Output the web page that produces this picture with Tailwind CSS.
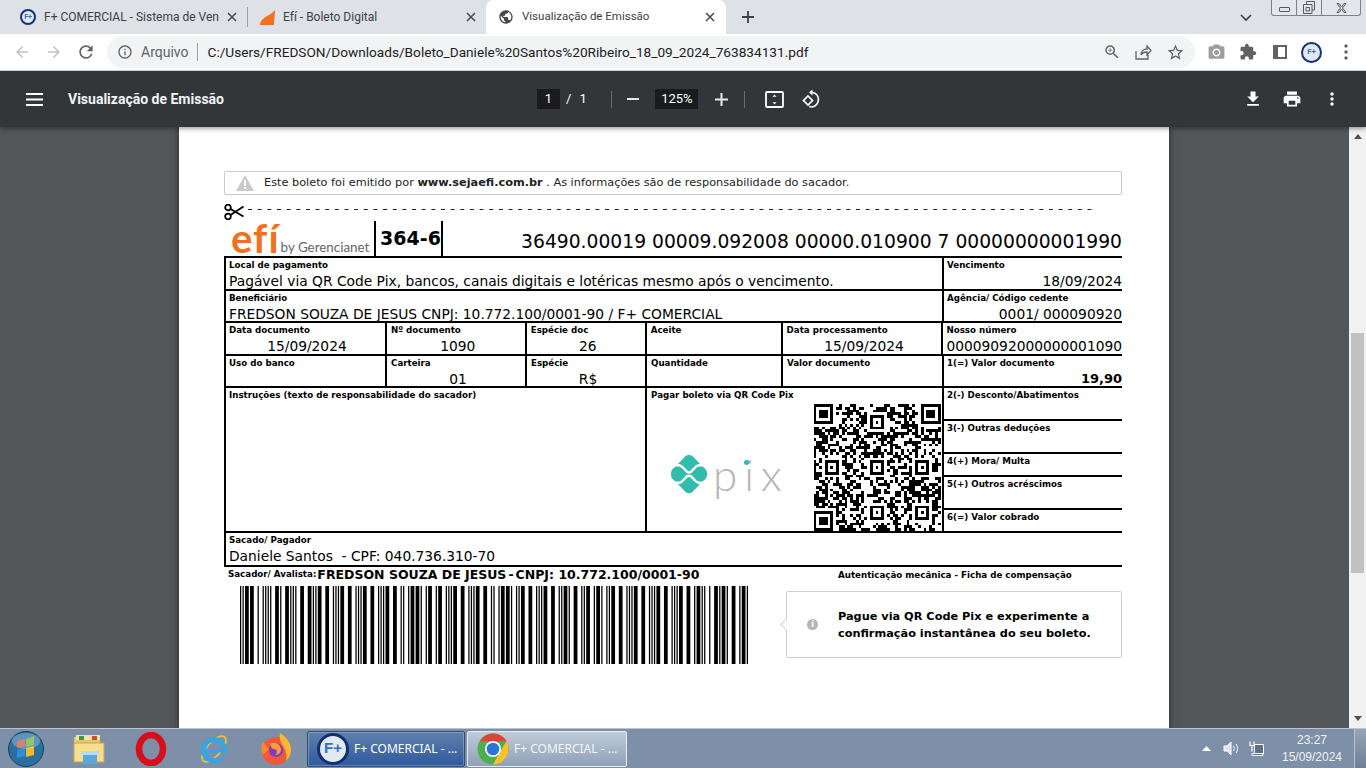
<!DOCTYPE html>
<html lang="pt-BR">
<head>
  <meta charset="UTF-8">
  <title>Visualização de Emissão</title>
  <script src="https://cdn.jsdelivr.net/npm/@tailwindcss/browser@4"></script>
</head>
<body class="bg-[#525659]">
  <div class="flex flex-col w-[1366px] h-[768px] overflow-hidden font-['Roboto',sans-serif]">

    <!-- Abas do navegador -->
    <div class="relative flex items-end h-[34px] shrink-0 bg-[#dee1e6] text-[12px] text-[#3c4043]">
      <div class="flex items-center w-[248px] h-[34px] pl-[20px] shrink-0">
        <div class="flex items-center justify-center w-[16px] h-[16px] rounded-full border-2 border-[#12327f] bg-[#e4e8ef] text-[7px] font-bold text-[#2f6fd0] shrink-0">F+</div>
        <span class="ml-[8px] w-[174px] whitespace-nowrap">F+ COMERCIAL - Sistema de Ven</span>
        <svg class="ml-[9px] w-[10px] h-[10px] shrink-0" viewBox="0 0 10 10" fill="none" stroke="#45484c" stroke-width="1.5"><path d="M1 1l8 8M9 1l-8 8"/></svg>
        <span class="ml-[10px] w-px h-[20px] bg-[#9aa0a6]"></span>
      </div>
      <div class="flex items-center w-[238px] h-[34px] pl-[11px] shrink-0">
        <svg class="w-[17px] h-[17px]" viewBox="0 0 17 17"><path d="M1 16c0-5 5-8 9-10 2-1 4-3 6-5l-1 15H3c-1 0-2 0-2 0z" fill="#f37021"/></svg>
        <span class="ml-[7px] w-[183px] whitespace-nowrap">Efí - Boleto Digital</span>
        <svg class="w-[10px] h-[10px]" viewBox="0 0 10 10" fill="none" stroke="#45484c" stroke-width="1.5"><path d="M1 1l8 8M9 1l-8 8"/></svg>
      </div>
      <div class="flex items-center w-[240px] h-[34px] pl-[12px] bg-white rounded-t-[8px] shrink-0">
        <svg class="w-[16px] h-[16px]" viewBox="0 0 24 24" fill="#45484c"><path d="M12 2C6.48 2 2 6.48 2 12s4.48 10 10 10 10-4.48 10-10S17.52 2 12 2zm-1 17.93c-3.95-.49-7-3.85-7-7.93 0-.62.08-1.21.21-1.79L9 15v1c0 1.1.9 2 2 2v1.93zm6.9-2.54c-.26-.81-1-1.39-1.9-1.39h-1v-3c0-.55-.45-1-1-1H8v-2h2c.55 0 1-.45 1-1V7h2c1.1 0 2-.9 2-2v-.41c2.93 1.19 5 4.06 5 7.41 0 2.08-.8 3.97-2.1 5.39z"/></svg>
        <span class="ml-[8px] w-[183px] text-[11.5px] whitespace-nowrap">Visualização de Emissão</span>
        <svg class="w-[10px] h-[10px]" viewBox="0 0 10 10" fill="none" stroke="#45484c" stroke-width="1.5"><path d="M1 1l8 8M9 1l-8 8"/></svg>
      </div>
      <svg class="ml-[16px] mb-[11px] w-[12px] h-[12px] shrink-0" viewBox="0 0 12 12" stroke="#3c4043" stroke-width="1.8"><path d="M6 0v12M0 6h12"/></svg>
      <svg class="ml-[486px] mb-[12px] w-[12px] h-[8px] shrink-0" viewBox="0 0 12 8" fill="none" stroke="#3c4043" stroke-width="1.6"><path d="M1 1l5 5 5-5"/></svg>
      <!-- Controles da janela -->
      <div class="absolute top-0 left-[1271px] flex w-[90px] h-[16px] border border-t-0 border-[#7d8186] rounded-b-[3px] bg-[#e3e6ea]">
        <div class="flex items-center justify-center w-[25px] border-r border-[#7d8186]"><span class="mt-[3px] w-[11px] h-[5px] border border-[#55585c] rounded-[1px]"></span></div>
        <div class="flex items-center justify-center w-[25px] border-r border-[#7d8186]">
          <svg class="w-[12px] h-[13px]" viewBox="0 0 12 13" fill="none" stroke="#55585c"><path d="M3.5 3V.5h8V9H9M.5 3.5H9v9H.5zM3 6.5h3.5V10H3z"/></svg>
        </div>
        <div class="flex items-center justify-center flex-1">
          <svg class="w-[11px] h-[10px]" viewBox="0 0 11 10" fill="none" stroke="#55585c"><path d="M1 .5h2L5.5 4 8 .5h2L6.5 5 10 9.5H8L5.5 6 3 9.5H1L4.5 5z"/></svg>
        </div>
      </div>
    </div>

    <!-- Barra de endereço -->
    <div class="flex items-center h-[37px] shrink-0 bg-white border-b border-[#d5d7da]">
      <svg class="ml-[13px] w-[18px] h-[18px] shrink-0" viewBox="0 0 24 24" fill="#bdc1c6"><path d="M20 11H7.83l5.59-5.59L12 4l-8 8 8 8 1.41-1.41L7.83 13H20v-2z"/></svg>
      <svg class="ml-[14px] w-[18px] h-[18px] shrink-0" viewBox="0 0 24 24" fill="#bdc1c6"><path d="M12 4l-1.41 1.41L16.17 11H4v2h12.17l-5.58 5.59L12 20l8-8z"/></svg>
      <svg class="ml-[13px] w-[20px] h-[20px] shrink-0" viewBox="0 0 24 24" fill="#5f6368"><path d="M17.65 6.35A7.958 7.958 0 0012 4c-4.42 0-7.99 3.58-7.99 8s3.57 8 7.99 8c3.73 0 6.84-2.55 7.73-6h-2.08A5.99 5.99 0 0112 18c-3.31 0-6-2.69-6-6s2.69-6 6-6c1.66 0 3.14.69 4.22 1.78L13 11h7V4l-2.35 2.35z"/></svg>
      <div class="flex items-center ml-[11px] w-[1088px] h-[32px] rounded-full bg-[#f1f3f4] shrink-0">
        <svg class="ml-[10px] w-[16px] h-[16px] shrink-0" viewBox="0 0 24 24" fill="#5f6368"><path d="M11 7h2v2h-2zm0 4h2v6h-2zm1-9C6.48 2 2 6.48 2 12s4.48 10 10 10 10-4.48 10-10S17.52 2 12 2zm0 18c-4.41 0-8-3.59-8-8s3.59-8 8-8 8 3.59 8 8-3.59 8-8 8z"/></svg>
        <span class="ml-[8px] text-[14px] text-[#5f6368]">Arquivo</span>
        <span class="ml-[8px] w-px h-[18px] bg-[#9aa0a6]"></span>
        <span class="ml-[10px] w-[895px] text-[13.65px] text-[#202124] whitespace-nowrap">C:/Users/FREDSON/Downloads/Boleto_Daniele%20Santos%20Ribeiro_18_09_2024_763834131.pdf</span>
        <svg class="w-[18px] h-[18px] shrink-0" viewBox="0 0 24 24" fill="#5f6368"><path d="M15.5 14h-.79l-.28-.27A6.471 6.471 0 0016 9.5 6.5 6.5 0 109.5 16c1.61 0 3.09-.59 4.23-1.57l.27.28v.79l5 4.99L20.49 19l-4.99-5zm-6 0C7.01 14 5 11.99 5 9.5S7.01 5 9.5 5 14 7.01 14 9.5 11.99 14 9.5 14z"/><path d="M10 7H9v2H7v1h2v2h1v-2h2V9h-2z"/></svg>
        <svg class="ml-[13px] w-[18px] h-[18px] shrink-0" viewBox="0 0 18 18" fill="none" stroke="#5f6368" stroke-width="1.3"><path d="M2 8v8h12v-4M7 12c0-4 3-6 6-6V3l4 4.5L13 12V9c-3 0-5 1-6 3z"/></svg>
        <svg class="ml-[14px] w-[19px] h-[19px] shrink-0" viewBox="0 0 24 24" fill="#5f6368"><path d="M22 9.24l-7.19-.62L12 2 9.19 8.63 2 9.24l5.46 4.73L5.82 21 12 17.27 18.18 21l-1.63-7.03L22 9.24zM12 15.4l-3.76 2.27 1-4.28-3.32-2.88 4.38-.38L12 6.1l1.71 4.04 4.38.38-3.32 2.88 1 4.28L12 15.4z"/></svg>
      </div>
      <svg class="ml-[12px] w-[19px] h-[19px] shrink-0" viewBox="0 0 24 24" fill="#9b9da0"><path d="M9 2L7.17 4H4c-1.1 0-2 .9-2 2v12c0 1.1.9 2 2 2h16c1.1 0 2-.9 2-2V6c0-1.1-.9-2-2-2h-3.17L15 2H9zm3 15c-2.76 0-5-2.24-5-5s2.24-5 5-5 5 2.24 5 5-2.24 5-5 5z"/><circle cx="12" cy="12" r="3.2"/></svg>
      <svg class="ml-[13px] w-[18px] h-[18px] shrink-0" viewBox="0 0 24 24" fill="#5f6368"><path d="M20.5 11H19V7c0-1.1-.9-2-2-2h-4V3.5C13 2.12 11.88 1 10.5 1S8 2.12 8 3.5V5H4c-1.1 0-1.99.9-1.99 2v3.8H3.5c1.49 0 2.7 1.21 2.7 2.7s-1.21 2.7-2.7 2.7H2V20c0 1.1.9 2 2 2h3.8v-1.5c0-1.49 1.21-2.7 2.7-2.7 1.49 0 2.7 1.21 2.7 2.7V22H17c1.1 0 2-.9 2-2v-4h1.5c1.38 0 2.5-1.12 2.5-2.5S21.88 11 20.5 11z"/></svg>
      <span class="flex justify-end ml-[16px] w-[14px] h-[14px] border-2 border-[#5f6368] bg-[#5f6368] shrink-0"><span class="w-[7px] h-full bg-white"></span></span>
      <div class="flex items-center justify-center ml-[14px] w-[21px] h-[21px] rounded-full border-2 border-[#12327f] bg-[#e4e8ef] text-[8px] font-bold text-[#2f6fd0] shrink-0">F+</div>
      <svg class="ml-[22px] w-[4px] h-[16px] shrink-0" viewBox="0 0 4 16" fill="#5f6368"><circle cx="2" cy="2" r="1.7"/><circle cx="2" cy="8" r="1.7"/><circle cx="2" cy="14" r="1.7"/></svg>
    </div>

    <!-- Barra do visualizador de PDF -->
    <div class="relative z-10 flex items-center h-[56px] shrink-0 bg-[#323639] text-white shadow-[0_2px_4px_rgba(0,0,0,0.35)]">
      <svg class="ml-[26px] w-[17px] h-[13px] shrink-0" viewBox="0 0 17 13" fill="#fff"><path d="M0 0h17v2H0zM0 5.5h17v2H0zM0 11h17v2H0z"/></svg>
      <span class="ml-[25px] w-[469px] text-[14px] font-bold whitespace-nowrap text-[#f1f3f4]">Visualização de Emissão</span>
      <span class="flex items-center justify-center w-[23px] h-[20px] bg-[#191b1c] text-[13px]">1</span>
      <span class="ml-[6px] text-[13px]">/</span>
      <span class="ml-[8px] w-[32px] text-[13px]">1</span>
      <span class="w-px h-[17px] bg-[#6a6d70]"></span>
      <span class="ml-[15px] w-[12px] h-[2px] bg-[#e8eaed]"></span>
      <span class="flex items-center justify-center ml-[16px] w-[43px] h-[20px] bg-[#191b1c] text-[13px]">125%</span>
      <svg class="ml-[17px] w-[13px] h-[13px] shrink-0" viewBox="0 0 13 13" fill="#e8eaed"><path d="M5.5 0h2v5.5H13v2H7.5V13h-2V7.5H0v-2h5.5z"/></svg>
      <span class="ml-[16px] w-px h-[17px] bg-[#6a6d70]"></span>
      <svg class="ml-[20px] w-[19px] h-[17px] shrink-0" viewBox="0 0 19 17" fill="none" stroke="#fff" stroke-width="1.8"><rect x="1" y="1" width="17" height="15" rx="1"/><path d="M9.5 3.5l2 2.2h-4zM9.5 13.5l2-2.2h-4z" fill="#fff" stroke="none"/></svg>
      <svg class="ml-[17px] w-[20px] h-[20px] shrink-0" viewBox="0 0 20 20" fill="none" stroke="#fff" stroke-width="1.7"><path d="M11 3.5c3.5 0 6.5 3 6.5 6.8S14.5 18 11 18c-1 0-2-.2-2.8-.7"/><path d="M11.5.5L8 3.5l3.500 3" fill="#fff" stroke="none"/><path d="M7 7l4.5 4.5L7 16l-4.500-4.500z"/></svg>
      <svg class="ml-[422px] w-[20px] h-[20px] shrink-0" viewBox="0 0 24 24" fill="#fff"><path d="M19 9h-4V3H9v6H5l7 7 7-7zM5 18v2h14v-2H5z"/></svg>
      <svg class="ml-[19px] w-[20px] h-[20px] shrink-0" viewBox="0 0 24 24" fill="#fff"><path d="M19 8H5c-1.66 0-3 1.34-3 3v6h4v4h12v-4h4v-6c0-1.66-1.34-3-3-3zm-3 11H8v-5h8v5zm3-7c-.55 0-1-.45-1-1s.45-1 1-1 1 .45 1 1-.45 1-1 1zm-1-9H6v4h12V3z"/></svg>
      <svg class="ml-[28px] w-[4px] h-[14px] shrink-0" viewBox="0 0 4 14" fill="#fff"><circle cx="2" cy="2" r="1.7"/><circle cx="2" cy="7" r="1.7"/><circle cx="2" cy="12" r="1.7"/></svg>
    </div>

    <!-- Área do documento -->
    <div class="flex h-[601px] shrink-0">
      <div class="w-[1349px] h-full pl-[179px] bg-[#525659] overflow-hidden">
        <div class="w-[990px] h-full px-[45px] pt-[44px] bg-white shadow-[0_0_6px_rgba(0,0,0,0.55)] font-['DejaVu_Sans',sans-serif] text-black">

          <!-- Aviso -->
          <div class="flex items-center w-[898px] h-[24px] pl-[11px] border border-[#c8c8c8] rounded-[2px] text-[11.3px] text-[#222]">
            <svg class="w-[18px] h-[16px] shrink-0" viewBox="0 0 18 16"><path d="M9 0l9 16H0z" fill="#c9c9c9"/><path d="M8 5h2v6H8zM8 12h2v2H8z" fill="#fff"/></svg>
            <span class="ml-[10px] whitespace-nowrap">Este boleto foi emitido por <b>www.sejaefi.com.br</b> . As informações são de responsabilidade do sacador.</span>
          </div>

          <!-- Linha de corte -->
          <div class="flex items-start h-[26px] w-[898px]">
            <svg class="mt-[9px] w-[20px] h-[16px] shrink-0" viewBox="0 0 20 16" fill="none" stroke="#000" stroke-width="1.8"><circle cx="4" cy="3.5" r="2.8"/><circle cx="4" cy="12.5" r="2.8"/><path d="M6.5 5l13 7.5M6.5 11l13-8.5"/></svg>
            <svg class="ml-[4px] mt-[14px] w-[844px] h-[1px] shrink-0" viewBox="0 0 844 1"><line x1="0" y1=".5" x2="844" y2=".5" stroke="#222" stroke-dasharray="4 5.65"/></svg>
          </div>

          <!-- Cabeçalho -->
          <div class="flex items-stretch h-[35px] w-[898px]">
            <div class="flex items-end w-[150px] pl-[7px] pb-[2px] shrink-0">
              <span class="font-['Lato',sans-serif] text-[40px] leading-[31px] font-bold tracking-[1px] text-[#f37021]">efí</span>
              <span class="ml-[1px] font-['Lato',sans-serif] text-[13.4px] leading-[14px] text-[#666] whitespace-nowrap">by Gerencianet</span>
            </div>
            <div class="flex items-center justify-center w-[69px] pl-[4px] border-x-2 border-black text-[19px] font-bold shrink-0">364-6</div>
            <div class="flex items-end justify-end flex-1 pb-[3px] text-[18.72px] leading-[22px] whitespace-nowrap">36490.00019 00009.092008 00000.010900 7 00000000001990</div>
          </div>

          <!-- Ficha -->
          <div class="w-[898px] h-[309px] border-t-2 border-black text-[13.8px]">
            <div class="flex h-[33px] border-b-2 border-black">
              <div class="w-[720px] pl-[3px] border-x-2 border-black"><p class="text-[8.7px] leading-[14px] font-bold">Local de pagamento</p><p class="mt-[2px] leading-[14px] whitespace-nowrap">Pagável via QR Code Pix, bancos, canais digitais e lotéricas mesmo após o vencimento.</p></div>
              <div class="flex-1 pl-[3px]"><p class="text-[8.7px] leading-[14px] font-bold">Vencimento</p><p class="mt-[2px] leading-[14px] text-right">18/09/2024</p></div>
            </div>
            <div class="flex h-[32px] border-b-2 border-black">
              <div class="w-[720px] pl-[3px] border-x-2 border-black"><p class="text-[8.7px] leading-[14px] font-bold">Beneficiário</p><p class="mt-[2px] leading-[14px] whitespace-nowrap">FREDSON SOUZA DE JESUS CNPJ: 10.772.100/0001-90 / F+ COMERCIAL</p></div>
              <div class="flex-1 pl-[3px]"><p class="text-[8.7px] leading-[14px] font-bold">Agência/ Código cedente</p><p class="mt-[2px] leading-[14px] text-right">0001/ 000090920</p></div>
            </div>
            <div class="flex h-[33px] border-b-2 border-black">
              <div class="w-[163px] pl-[3px] border-x-2 border-black"><p class="text-[8.7px] leading-[14px] font-bold">Data documento</p><p class="mt-[2px] leading-[14px] text-center">15/09/2024</p></div>
              <div class="w-[140px] pl-[4px] border-r-2 border-black"><p class="text-[8.7px] leading-[14px] font-bold">Nº documento</p><p class="mt-[2px] leading-[14px] text-center">1090</p></div>
              <div class="w-[120px] pl-[4px] border-r-2 border-black"><p class="text-[8.7px] leading-[14px] font-bold">Espécie doc</p><p class="mt-[2px] leading-[14px] text-center">26</p></div>
              <div class="w-[136px] pl-[4px] border-r-2 border-black"><p class="text-[8.7px] leading-[14px] font-bold">Aceite</p></div>
              <div class="w-[161px] pl-[4px] border-r-2 border-black"><p class="text-[8.7px] leading-[14px] font-bold">Data processamento</p><p class="mt-[2px] leading-[14px] text-center">15/09/2024</p></div>
              <div class="flex-1 pl-[3px]"><p class="text-[8.7px] leading-[14px] font-bold">Nosso número</p><p class="mt-[2px] leading-[14px] text-right whitespace-nowrap">00009092000000001090</p></div>
            </div>
            <div class="flex h-[32px] border-b-2 border-black">
              <div class="w-[163px] pl-[3px] border-x-2 border-black"><p class="text-[8.7px] leading-[14px] font-bold">Uso do banco</p></div>
              <div class="w-[140px] pl-[4px] border-r-2 border-black"><p class="text-[8.7px] leading-[14px] font-bold">Carteira</p><p class="mt-[2px] leading-[14px] text-center">01</p></div>
              <div class="w-[120px] pl-[4px] border-r-2 border-black"><p class="text-[8.7px] leading-[14px] font-bold">Espécie</p><p class="mt-[2px] leading-[14px] text-center">R$</p></div>
              <div class="w-[136px] pl-[4px] border-r-2 border-black"><p class="text-[8.7px] leading-[14px] font-bold">Quantidade</p></div>
              <div class="w-[161px] pl-[4px] border-r-2 border-black"><p class="text-[8.7px] leading-[14px] font-bold">Valor documento</p></div>
              <div class="flex-1 pl-[3px]"><p class="text-[8.7px] leading-[14px] font-bold">1(=) Valor documento</p><p class="mt-[2px] leading-[14px] text-right font-bold text-[13px]">19,90</p></div>
            </div>
            <div class="flex h-[145px] border-b-2 border-black">
              <div class="w-[423px] pl-[3px] border-x-2 border-black"><p class="text-[8.7px] leading-[14px] font-bold">Instruções (texto de responsabilidade do sacador)</p></div>
              <div class="w-[297px] border-r-2 border-black pl-[4px]">
                <p class="text-[8.7px] leading-[14px] font-bold">Pagar boleto via QR Code Pix</p>
                <div class="flex mt-[2px]">
                  <div class="flex items-center w-[162px] h-[127px] pl-[20px] pt-[12px] shrink-0">
                    <svg class="w-[36px] h-[38px] shrink-0" viewBox="0 0 36 38" fill="#32bcad"><path d="M18 0c1.5 0 3 .6 4 1.6L29 9c-2 0-3.500.6-5 2l-4.500 4.500c-.8.8-2.200.8-3 0L12 11c-1.500-1.400-3-2-5-2l7-7.400C15 .6 16.500 0 18 0zM4.500 11.500H7c1.500 0 2.800.6 3.800 1.600l4.200 4.300c1.600 1.600 4.400 1.600 6 0l4.200-4.300c1-1 2.300-1.600 3.800-1.600h2.500L34.500 14c2 2 2 8 0 10l-3 2.500H29c-1.500 0-2.800-.6-3.800-1.600L21 20.600c-1.600-1.600-4.400-1.600-6 0l-4.200 4.300c-1 1-2.300 1.600-3.800 1.600H4.500L1.500 24c-2-2-2-8 0-10zM16.500 22.500c.8-.8 2.200-.8 3 0L24 27c1.500 1.400 3 2 5 2l-7 7.400c-2 2.100-6 2.100-8 0L7 29c2 0 3.500-.6 5-2z"/></svg>
                    <span class="relative ml-[6px] font-['Lato',sans-serif] text-[44px] leading-none font-light tracking-[7px] text-[#b5b5b5]">pix<span class="absolute left-[31px] top-[8px] w-[5px] h-[5px] rounded-full bg-[#32bcad]"></span></span>
                  </div>
                  <svg id="qr" class="w-[128px] h-[127px] shrink-0" viewBox="0 0 45 45" shape-rendering="crispEdges"></svg>
                </div>
              </div>
              <div class="flex-1">
                <div class="h-[33px] pl-[3px] border-b-2 border-black"><p class="text-[8.7px] leading-[14px] font-bold">2(-) Desconto/Abatimentos</p></div>
                <div class="h-[33px] pl-[3px] border-b-2 border-black"><p class="text-[8.7px] leading-[14px] font-bold">3(-) Outras deduções</p></div>
                <div class="h-[23px] pl-[3px] border-b-2 border-black"><p class="text-[8.7px] leading-[14px] font-bold">4(+) Mora/ Multa</p></div>
                <div class="h-[33px] pl-[3px] border-b-2 border-black"><p class="text-[8.7px] leading-[14px] font-bold">5(+) Outros acréscimos</p></div>
                <div class="pl-[3px]"><p class="text-[8.7px] leading-[14px] font-bold">6(=) Valor cobrado</p></div>
              </div>
            </div>
            <div class="h-[34px] pl-[3px] border-l-2 border-b-2 border-black"><p class="text-[8.7px] leading-[14px] font-bold">Sacado/ Pagador</p><p class="mt-[2px] leading-[14px]">Daniele Santos&nbsp; - CPF: 040.736.310-70</p></div>
          </div>

          <!-- Rodapé da ficha -->
          <div class="flex w-[898px] mt-[1px]">
            <div class="w-[562px] shrink-0">
              <p class="flex items-center h-[18px] pl-[4px] whitespace-nowrap"><span class="text-[8.7px] font-bold">Sacador/ Avalista:</span><span class="ml-[1px] text-[12.5px] font-bold">FREDSON SOUZA DE JESUS<span class="mx-[2px]">-</span>CNPJ: 10.772.100/0001-90</span></p>
              <svg id="barcode" class="ml-[16px] mt-[2px] w-[508px] h-[78px]" viewBox="0 0 405 78" preserveAspectRatio="none"></svg>
            </div>
            <div class="flex-1">
              <p class="ml-[52px] mt-[1px] text-[8.7px] leading-[16px] font-bold whitespace-nowrap">Autenticação mecânica - Ficha de compensação</p>
              <div class="relative flex items-center w-[336px] h-[67px] mt-[8px] border border-[#cfcfcf] rounded-[2px]">
                <span class="absolute -left-[5px] top-[28px] w-[9px] h-[9px] rotate-45 bg-white border-l border-b border-[#cfcfcf]"></span>
                <span class="flex items-center justify-center ml-[20px] w-[11px] h-[11px] rounded-full bg-[#b5b5b5] text-[8px] font-bold text-white shrink-0">i</span>
                <p class="ml-[20px] text-[11.3px] leading-[17px] font-bold whitespace-nowrap">Pague via QR Code Pix e experimente a<br>confirmação instantânea do seu boleto.</p>
              </div>
            </div>
          </div>
        </div>
      </div>
      <!-- Barra de rolagem -->
      <div class="flex flex-col items-center w-[17px] h-full bg-[#f1f1f1]">
        <svg class="mt-[7px] w-[8px] h-[5px]" viewBox="0 0 8 5" fill="#505050"><path d="M4 0l4 5H0z"/></svg>
        <span class="mt-[194px] w-[13px] h-[240px] bg-[#c1c1c1]"></span>
        <svg class="mt-[143px] w-[8px] h-[5px]" viewBox="0 0 8 5" fill="#505050"><path d="M0 0h8L4 5z"/></svg>
      </div>
    </div>

    <!-- Barra de tarefas -->
    <div class="flex items-center h-[40px] shrink-0 bg-[#7e90a7] border-t border-[#b8c4d2] text-white text-[12px] font-['Noto_Sans',sans-serif]">
      <svg class="ml-[8px] w-[36px] h-[36px] shrink-0" viewBox="0 0 36 36">
        <circle cx="18" cy="18" r="17.5" fill="#2b6f9e" stroke="#1d3f5f"/>
        <path d="M9 10l8-2v8l-8 1z" fill="#e8502a"/><path d="M18 8l8-3v9l-8 2z" fill="#7fb72e"/><path d="M9 18l8-1v8l-8 2z" fill="#2f8ddb"/><path d="M18 17l8-2v9l-8 2z" fill="#f6b927"/>
        <ellipse cx="18" cy="10" rx="14" ry="8" fill="#bcdcf0" opacity=".35"/>
      </svg>
      <svg class="ml-[29px] w-[32px] h-[30px] shrink-0" viewBox="0 0 32 30">
        <path d="M1 3h26v25H1z" fill="#e6c874"/><path d="M3 1h24v5H3z" fill="#f4e3a8"/><path d="M6 2h5v4H6z" fill="#3f9a46"/><path d="M19 2h5v4h-5z" fill="#cf4b3a"/>
        <path d="M1 9h30v19H1z" fill="#f7dd8c" stroke="#c9a64f"/><path d="M10 21h14v9H10z" fill="#5aa7dd"/><path d="M8 17h18v4H8z" fill="#b6dcf2"/>
      </svg>
      <svg class="ml-[30px] w-[32px] h-[34px] shrink-0" viewBox="0 0 32 34"><ellipse cx="16" cy="17" rx="12" ry="14" fill="none" stroke="#d5101c" stroke-width="6.5"/></svg>
      <svg class="ml-[30px] w-[34px] h-[36px] shrink-0" viewBox="0 0 34 36">
        <ellipse cx="17" cy="18" rx="16" ry="7" transform="rotate(-48 17 18)" fill="none" stroke="#efc23a" stroke-width="1.8"/>
        <circle cx="17" cy="19" r="10.5" fill="none" stroke="#35a6e2" stroke-width="5"/><path d="M8 18h18v3.5H8z" fill="#35a6e2"/><path d="M24 22h5l-2 6-5-1z" fill="#7e90a7"/>
      </svg>
      <svg class="ml-[28px] w-[34px] h-[34px] shrink-0" viewBox="0 0 34 34">
        <circle cx="17" cy="19" r="14" fill="#f1573a"/><path d="M21 1c6 4 11 9 11 17 0 4-2 8-5 11 1-5 0-11-3-15-2-3-4-7-3-13z" fill="#ffb52e"/><path d="M4 10c-2 4-2 9 0 13l6-6z" fill="#ff8a2a"/>
        <circle cx="17" cy="18" r="7" fill="#7a3bc6"/><path d="M11 12c5-3 11 0 11 6 0 3-3 5-6 5 3-2 2-6-1-6-2 0-3-2-4-5z" fill="#ff9a2e"/>
      </svg>
      <!-- Botões das janelas -->
      <div class="flex items-center ml-[14px] w-[158px] h-[36px] pl-[9px] border border-[#2e4c79] rounded-[2px] bg-gradient-to-b from-[#5f7fae] to-[#2f5a9c] shadow-[inset_0_0_0_1px_rgba(255,255,255,0.25)] shrink-0">
        <div class="flex items-center justify-center w-[32px] h-[32px] rounded-full border-[3px] border-[#0f2f72] bg-[#e4e8ef] text-[15px] font-bold text-[#2f6fd0] shrink-0 font-['Liberation_Sans',sans-serif]">F+</div>
        <span class="ml-[5px] whitespace-nowrap">F+ COMERCIAL - ...</span>
      </div>
      <div class="flex items-center ml-[2px] w-[160px] h-[36px] pl-[9px] border border-[#e8edf3] rounded-[2px] bg-gradient-to-b from-[#c0cbd8] to-[#8fa1b6] shrink-0">
        <svg class="w-[32px] h-[32px] shrink-0" viewBox="0 0 32 32">
          <circle cx="16" cy="16" r="15.5" fill="#4caf50"/>
          <path d="M16 .5a15.5 15.5 0 0113.42 7.75L16 8.25H3A15.5 15.5 0 0116 .5z" fill="#db4437"/>
          <path d="M29.42 8.25A15.5 15.5 0 0116 31.5L22.5 20z" fill="#fbc02d"/>
          <circle cx="16" cy="16" r="8" fill="#fff"/><circle cx="16" cy="16" r="6.3" fill="#2a75d6"/>
        </svg>
        <span class="ml-[5px] whitespace-nowrap text-[#f3f5f8]">F+ COMERCIAL - ...</span>
      </div>
      <!-- Bandeja do sistema -->
      <svg class="ml-[575px] w-[9px] h-[5px] shrink-0" viewBox="0 0 9 5" fill="#fff"><path d="M4.5 0L9 5H0z"/></svg>
      <svg class="ml-[12px] w-[17px] h-[15px] shrink-0" viewBox="0 0 17 15" fill="none" stroke="#fff"><path d="M1 5h3l4-4v13l-4-4H1z" fill="#dfe5ec"/><path d="M10.5 5c1 1.5 1 3.5 0 5M13 3c2 2.5 2 6.5 0 9"/></svg>
      <svg class="ml-[9px] w-[16px] h-[16px] shrink-0" viewBox="0 0 16 16" fill="none" stroke="#fff"><path d="M5.5 3.5h9v9h-9zM3 12.5h11v2H3z" fill="#5e7089"/><path d="M1 .5v4h4v-4M3 4.5v6" stroke-width="1.2"/></svg>
      <div class="ml-[15px] w-[76px] text-center text-[12px] leading-[17px] text-[#eef2f6] font-['Liberation_Sans',sans-serif]">23:27<br>15/09/2024</div>
      <span class="ml-[10px] w-[14px] h-full border-l border-[#b8c4d2] bg-gradient-to-b from-[#95a4b6] to-[#6e8097]"></span>
    </div>
  </div>

  <script>
    // barcode ITF do boleto
    const digits = "36497000000000019900000100009092000000001090";
    const pats = ["nnwwn","wnnnw","nwnnw","wwnnn","nnwnw","wnwnn","nwwnn","nnnww","wnnwn","nwnwn"];
    let bars = "", x = 0;
    const put = (w, on) => { if (on) bars += `<rect x="${x}" y="0" width="${w}" height="78"/>`; x += w; };
    put(1,1); put(1,0); put(1,1); put(1,0);
    for (let i = 0; i < digits.length; i += 2) {
      const a = pats[+digits[i]], b = pats[+digits[i + 1]];
      for (let j = 0; j < 5; j++) {
        put(a[j] === "w" ? 3 : 1, 1);
        put(b[j] === "w" ? 3 : 1, 0);
      }
    }
    put(3,1); put(1,0); put(1,1);
    document.getElementById("barcode").innerHTML = bars;

    // QR de 45 módulos (padrão ilustrativo)
    const N = 45;
    let seed = 763834131;
    const rnd = () => (seed = (seed * 1664525 + 1013904223) >>> 0) / 4294967296;
    const grid = [];
    for (let r = 0; r < N; r++) { grid.push([]); for (let c = 0; c < N; c++) grid[r].push(rnd() > 0.5); }
    const block = (r0, c0, size) => {
      for (let r = -1; r <= size; r++) for (let c = -1; c <= size; c++) {
        const rr = r0 + r, cc = c0 + c;
        if (rr < 0 || cc < 0 || rr >= N || cc >= N) continue;
        const edge = r === 0 || c === 0 || r === size - 1 || c === size - 1;
        const core = size === 7 ? (r >= 2 && r <= 4 && c >= 2 && c <= 4) : (r === 2 && c === 2);
        const inside = r >= 0 && c >= 0 && r < size && c < size;
        grid[rr][cc] = inside && (edge || core);
      }
    };
    block(0, 0, 7); block(0, N - 7, 7); block(N - 7, 0, 7);
    [[4, 20], [20, 4], [20, 20], [20, 36], [36, 20], [36, 36]].forEach(p => block(p[0], p[1], 5));
    let qr = "";
    grid.forEach((row, r) => row.forEach((on, c) => { if (on) qr += `<rect x="${c}" y="${r}" width="1" height="1"/>`; }));
    document.getElementById("qr").innerHTML = qr;
  </script>
</body>
</html>
